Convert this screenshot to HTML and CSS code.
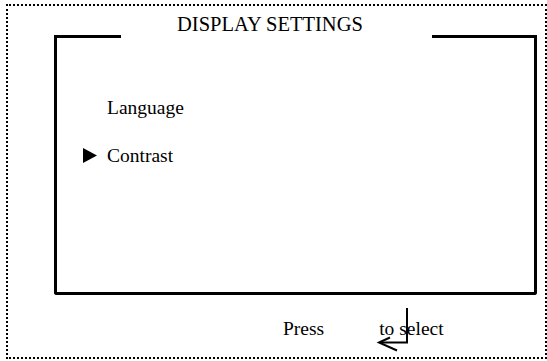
FILE: index.html
```html
<!DOCTYPE html>
<html>
<head>
<meta charset="utf-8">
<link rel="stylesheet" href="styles.css">
</head>
<body>
<div class="screen">
  <div class="title">DISPLAY SETTINGS</div>
  <div class="frame">
    <div class="frame-top"><span class="seg seg-left"></span><span class="seg seg-right"></span></div>
    <ul class="menu">
      <li class="item"><span class="marker"></span><span class="label">Language</span></li>
      <li class="item selected"><span class="marker"><svg class="tri" width="14" height="15" viewBox="0 0 14 15"><polygon points="0,0 14,7.5 0,15" fill="#000"/></svg></span><span class="label">Contrast</span></li>
    </ul>
  </div>
  <div class="footer">
    <span class="label">Press</span><span class="key"></span><span class="label">to select</span>
    <svg class="enter" width="34" height="48" viewBox="0 0 34 48"><path d="M31 3 V37.5 H4" fill="none" stroke="#000" stroke-width="2"/><path d="M14 32.5 L3 37.5 L21 45.5" fill="none" stroke="#000" stroke-width="2"/></svg>
  </div>
</div>
</body>
</html>
```
FILE: styles.css
```css
html, body {
  margin: 0;
  padding: 0;
  background: #fff;
}
body {
  font-family: "Liberation Serif", "Times New Roman", serif;
  color: #000;
}
.screen {
  box-sizing: border-box;
  margin: 4px 0 0 6px;
  width: 541px;
  height: 355px;
  border: 2px dotted #000;
  padding-top: 6px;
}
.title {
  font-size: 20.5px;
  line-height: 24px;
  height: 24px;
  padding-left: 169px;
}
.frame {
  box-sizing: border-box;
  margin: -1px 0 0 46px;
  width: 483px;
  height: 260px;
  border: 3px solid #000;
  border-top: none;
  border-radius: 0 0 3px 3px;
}
.frame-top {
  display: flex;
  justify-content: space-between;
  height: 3px;
}
.seg {
  display: block;
  height: 3px;
  background: #000;
}
.seg-left { width: 64px; }
.seg-right { width: 102px; }
.menu {
  list-style: none;
  margin: 0;
  padding: 59px 0 0 26px;
  display: flex;
  flex-direction: column;
  gap: 26px;
}
.item {
  display: flex;
  align-items: flex-start;
  font-size: 19.5px;
  line-height: 22px;
}
.marker {
  flex: 0 0 24px;
  height: 22px;
}
.tri {
  display: block;
  margin-top: 3px;
}
.footer {
  position: relative;
  display: flex;
  margin-top: 23px;
  padding-left: 275px;
  font-size: 19.5px;
  line-height: 22px;
}
.key {
  width: 55px;
}
.enter {
  position: absolute;
  left: 368px;
  top: -13px;
}
```
